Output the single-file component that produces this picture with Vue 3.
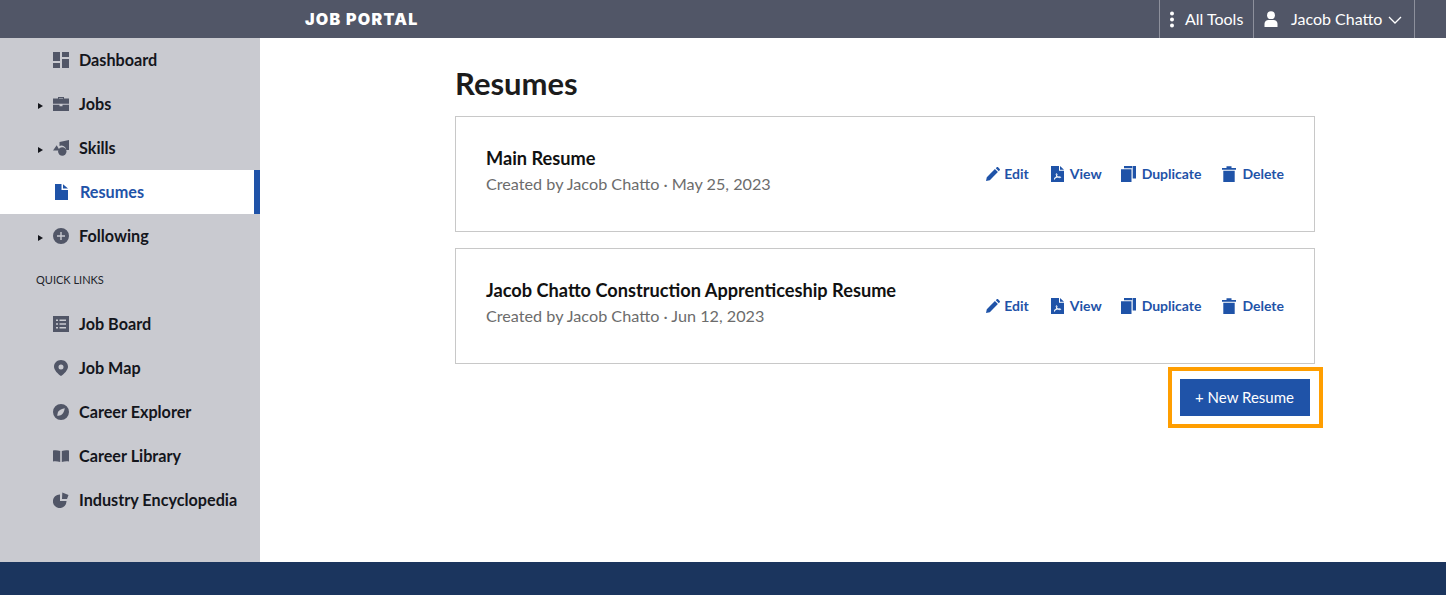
<template>
  <div class="page">
    <header class="topbar">
      <div class="logo">JOB PORTAL</div>
      <div class="top-right">
        <div class="top-item tools">
          <svg width="6" height="17" viewBox="0 0 6 17"><circle cx="3" cy="2.500" r="2" /><circle cx="3" cy="8.500" r="2" /><circle cx="3" cy="14.500" r="2" /></svg>
          <span>All Tools</span>
        </div>
        <div class="top-item user">
          <svg width="14" height="16" viewBox="0 0 14 16"><circle cx="7" cy="4.200" r="3.900" /><path d="M0.500 16v-3.200C0.500 10.400 2.400 9 4.400 9h5.200c2 0 3.900 1.400 3.900 3.800V16z" /></svg>
          <span class="user-name">Jacob Chatto</span>
          <svg class="chev" width="14" height="8" viewBox="0 0 14 8"><path d="M1 1l6 6 6-6" /></svg>
        </div>
      </div>
    </header>

    <div class="body">
      <aside class="sidebar">
        <template v-for="item in nav" :key="item.label">
          <div v-if="item.heading" class="heading">{{ item.label }}</div>
          <div v-else class="nav-item" :class="{ active: item.active }">
            <span class="caret" :class="{ on: item.caret }"></span>
            <svg class="nav-icon" width="16" height="16" viewBox="0 0 16 16" v-html="item.icon"></svg>
            <span class="nav-label">{{ item.label }}</span>
          </div>
        </template>
      </aside>

      <main class="content">
        <h1>Resumes</h1>
        <div class="card" v-for="r in resumes" :key="r.title">
          <div class="card-text">
            <div class="card-title">{{ r.title }}</div>
            <div class="card-meta">{{ r.meta }}</div>
          </div>
          <div class="actions">
            <a class="action edit">
              <svg width="14" height="14" viewBox="0 0 14 14"><path d="M0 14l.8-3.800L8.900 2.100l3 3-8.100 8.100zM9.800 1.200L10.700.3c.4-.4 1-.4 1.400 0l1.600 1.600c.4.4.4 1 0 1.400l-.9.900z" /></svg>
              Edit
            </a>
            <a class="action view">
              <svg width="13" height="16" viewBox="0 0 13 16"><path fill-rule="evenodd" d="M0 0h8v4.800h5V16H0zM9 0l4 3.800H9z" /><path class="pdf" d="M3 13.500c1.700-1.200 2.600-3 3-5-.1-1.200-.9-1.200-.8 0 .3 1.700 1.700 3 3.600 3.200 1.200 0 1.200-.9 0-.9-1.800 0-4 .5-5.800 1.700" /></svg>
              View
            </a>
            <a class="action">
              <svg width="15" height="16" viewBox="0 0 15 16"><path d="M0 3.300h10.500V16H0zM3 0h8.500v2.200H3zM12 0h3v12.500h-3.300V2.400H12z" /></svg>
              Duplicate
            </a>
            <a class="action delete">
              <svg width="14" height="16" viewBox="0 0 14 16"><path d="M0 2h4.500V.3h5V2H14v1.700H0zM1.300 4.700h11.400V16H1.300z" /></svg>
              Delete
            </a>
          </div>
        </div>
        <div class="button-row">
          <button class="new-btn">+ New Resume</button>
        </div>
      </main>
    </div>

    <footer class="footer"></footer>
  </div>
</template>

<script setup>
const nav = [
  { label: 'Dashboard', icon: '<path d="M0 0h7v9H0zM9 0h7v5H9zM9 7h7v9H9zM0 11h7v5H0z"/>' },
  { label: 'Jobs', caret: true, icon: '<path fill-rule="evenodd" d="M5 2.500V1h6v1.500h5v5.200H0V2.500zM6 2.500h4V2H6zM0 8.800h6.500v1.400h3V8.800H16V15H0z"/>' },
  { label: 'Skills', caret: true, icon: '<path d="M6.500 2L16 0v10h-2.700A5 5 0 0 0 6.500 6zM3.700 5.200L6.700 10.500H0z"/><circle cx="9.300" cy="11.500" r="4.200"/>' },
  { label: 'Resumes', active: true, icon: '<path d="M2 0h6.500v6H15v10H2zM10 .2L15 4.500H10z"/>' },
  { label: 'Following', caret: true, icon: '<path fill-rule="evenodd" d="M8 0a8 8 0 1 1 0 16A8 8 0 0 1 8 0zM7.300 4v3.300H4v1.400h3.300V12h1.400V8.700H12V7.300H8.700V4z"/>' },
  { label: 'QUICK LINKS', heading: true },
  { label: 'Job Board', icon: '<path fill-rule="evenodd" d="M0 0h16v16H0zM3 3.500v1.500h2V3.500zM6.500 3.500v1.500H13V3.500zM3 7.300v1.500h2V7.300zM6.500 7.300v1.500H13V7.300zM3 11v1.500h2V11zM6.500 11v1.500H13V11z"/>' },
  { label: 'Job Map', icon: '<path fill-rule="evenodd" d="M8 0c3.900 0 7 2.900 7 6.800 0 3.300-3.900 7.300-7 9.200-3.100-1.900-7-5.900-7-9.200C1 2.900 4.100 0 8 0zM8 4.400a2.500 2.500 0 1 0 0 5 2.500 2.500 0 0 0 0-5z"/>' },
  { label: 'Career Explorer', icon: '<path fill-rule="evenodd" d="M8 0a8 8 0 1 1 0 16A8 8 0 0 1 8 0zM11.800 4.200C9 4.600 6.300 6 5.300 7.500c-.6 1-.8 2.600-1.100 4.300 1.700-.3 3.300-.5 4.300-1.100 1.500-1 2.900-3.700 3.300-6.500z"/>' },
  { label: 'Career Library', icon: '<path d="M0 2.500c2.500-.3 5-.2 7.200.5V14c-2.200-.7-4.700-.9-7.200-.6zM8.800 3c2.200-.7 4.700-.8 7.200-.5v10.900c-2.500-.3-5-.1-7.200.6z"/>' },
  { label: 'Industry Encyclopedia', icon: '<path d="M7 2.500V9h6.500A6.800 6.800 0 1 1 7 2.500zM9.300 0.500L15.500 3 14 7H9z"/>' }
]

const resumes = [
  { title: 'Main Resume', meta: 'Created by Jacob Chatto · May 25, 2023' },
  { title: 'Jacob Chatto Construction Apprenticeship Resume', meta: 'Created by Jacob Chatto · Jun 12, 2023' }
]
</script>

<style>
html,
body {
  margin: 0;
  background: #fff;
}
</style>

<style scoped>
.page {
  display: flex;
  flex-direction: column;
  height: 595px;
  overflow: hidden;
  font-family: "Lato", "Liberation Sans", sans-serif;
  color: #14161c;
}

.topbar {
  height: 38px;
  flex: none;
  display: flex;
  align-items: center;
  justify-content: space-between;
  background: #515667;
  color: #fff;
  padding-left: 305px;
  padding-right: 31px;
}

.logo {
  font-family: "Inter", sans-serif;
  font-weight: 900;
  font-size: 16px;
  letter-spacing: 1.3px;
  margin-top: -1px;
}

.top-right {
  display: flex;
  height: 100%;
}

.top-item {
  display: flex;
  align-items: center;
  border-left: 1px solid #8d909c;
  font-size: 16px;
}

.top-item span {
  margin-top: -2px;
}

.top-item svg {
  fill: #fff;
}

.tools {
  width: 94px;
  padding-left: 9px;
  gap: 10px;
  box-sizing: border-box;
}

.user {
  width: 162px;
  padding-left: 10px;
  border-right: 1px solid #8d909c;
  box-sizing: border-box;
}

.user-name {
  margin-left: 13px;
  margin-right: 6px;
}

.user .chev {
  fill: none;
  stroke: #fff;
  stroke-width: 1.3;
  margin-top: 1px;
}

.body {
  flex: 1;
  display: flex;
  min-height: 0;
}

.sidebar {
  width: 260px;
  flex: none;
  background: #c9cad0;
}

.nav-item {
  height: 44px;
  display: flex;
  align-items: center;
  font-size: 16.2px;
  font-weight: 700;
  box-sizing: border-box;
  padding-left: 38px;
}

.nav-label {
  margin-top: -2px;
}

.caret {
  width: 5px;
  height: 0;
  margin-right: 10px;
}

.caret.on {
  width: 0;
  border-left: 5px solid #14161c;
  border-top: 3px solid transparent;
  border-bottom: 3px solid transparent;
  height: 0;
  margin-top: 3px;
}

.nav-icon {
  fill: #515667;
  margin-right: 10px;
  flex: none;
}

.nav-item.active {
  background: #fff;
  color: #1f53a8;
  border-right: 6px solid #1f53a8;
}

.nav-item.active .nav-label {
  margin-left: 1px;
}

.nav-item.active .nav-icon {
  fill: #1f53a8;
}

.heading {
  height: 44px;
  line-height: 44px;
  padding-left: 36px;
  font-size: 11px;
  color: #22242b;
}

.content {
  flex: 1;
  padding-left: 195px;
  padding-right: 131px;
}

h1 {
  margin: 0;
  height: 78px;
  line-height: 91px;
  font-size: 31px;
  font-weight: 700;
  color: #1c1c1c;
}

.card {
  height: 116px;
  box-sizing: border-box;
  border: 1px solid #c8c8c8;
  display: flex;
  align-items: center;
  justify-content: space-between;
  padding: 0 30px;
  margin-bottom: 16px;
}

.card-text {
  padding-bottom: 8px;
}

.card-title {
  font-size: 18.2px;
  font-weight: 700;
  color: #111;
  margin-bottom: 5px;
}

.card-meta {
  font-size: 16.2px;
  color: #6c6c6c;
}

.actions {
  display: flex;
  gap: 20px;
}

.action {
  display: flex;
  align-items: center;
  gap: 6px;
  font-size: 14px;
  font-weight: 700;
  color: #1f53a8;
  line-height: 15px;
  padding-bottom: 2px;
}

.edit {
  gap: 4px;
  margin-right: 2px;
}

.view {
  margin-right: -1px;
}

.delete {
  margin-left: 1px;
}

.action svg {
  fill: #1f53a8;
  transform: translateY(1px);
}

.action .pdf {
  fill: none;
  stroke: #fff;
  stroke-width: 1;
}

.button-row {
  display: flex;
  justify-content: flex-end;
  margin-top: -1px;
  padding-right: 5px;
}

.new-btn {
  position: relative;
  width: 130px;
  height: 37px;
  border: none;
  background: #1f53a8;
  color: #fff;
  font: inherit;
  font-size: 15px;
  padding: 0 1px 2px 0;
}

/* orange highlight drawn round the button */
.new-btn::after {
  content: "";
  position: absolute;
  inset: -12px -13px -12px -12px;
  border: 4px solid #ff9e00;
}

.footer {
  height: 33px;
  flex: none;
  background: #1b355e;
}
</style>
